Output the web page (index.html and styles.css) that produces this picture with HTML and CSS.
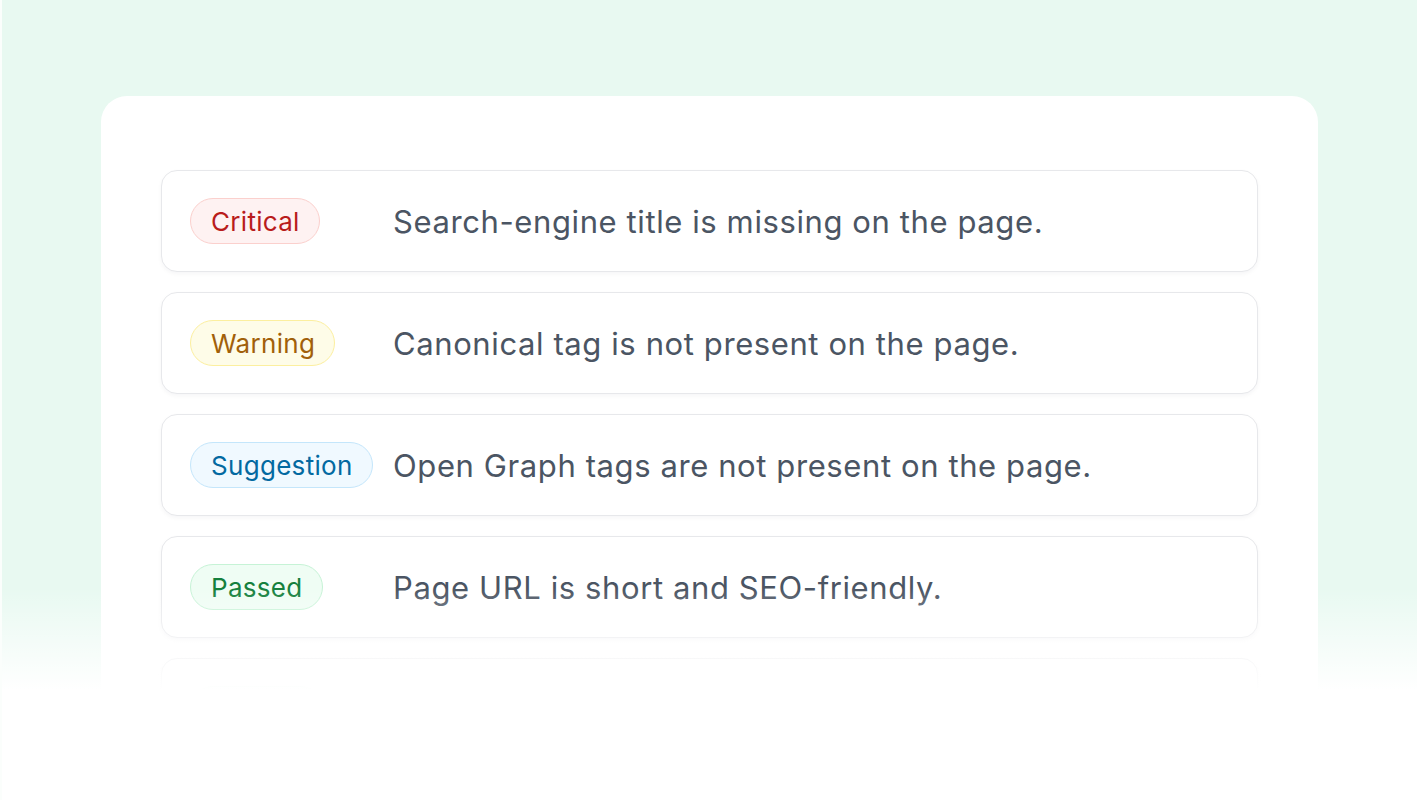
FILE: index.html
```html
<!DOCTYPE html>
<html lang="en">
<head>
<meta charset="utf-8">
<title>SEO checks</title>
<link rel="stylesheet" href="styles.css">
</head>
<body>
<div class="stage">
  <div class="panel">
    <ul class="checks">
      <li class="check">
        <span class="badge badge-critical">Critical</span>
        <span class="msg">Search-engine title is missing on the page.</span>
      </li>
      <li class="check">
        <span class="badge badge-warning">Warning</span>
        <span class="msg">Canonical tag is not present on the page.</span>
      </li>
      <li class="check">
        <span class="badge badge-suggestion">Suggestion</span>
        <span class="msg">Open Graph tags are not present on the page.</span>
      </li>
      <li class="check">
        <span class="badge badge-passed">Passed</span>
        <span class="msg">Page URL is short and SEO-friendly.</span>
      </li>
      <li class="check">
        <span class="badge badge-passed">Passed</span>
        <span class="msg">Meta description length is within limits.</span>
      </li>
    </ul>
  </div>
  <div class="fade"></div>
</div>
</body>
</html>
```

FILE: styles.css
```css
* { box-sizing: border-box; }
html, body { margin: 0; padding: 0; }
body {
  font-family: "Inter", "Noto Sans", "Liberation Sans", sans-serif;
  background: #ffffff;
}
.stage {
  position: relative;
  height: 800px;
  overflow: hidden;
  background: #e8f9f1;
  border-left: 2px solid #fbfefc;
  padding: 96px 0 0 99px;
}
.panel {
  width: 1217px;
  height: 760px;
  background: #ffffff;
  border-radius: 26px;
  padding: 74px 60px 0 60px;
}
.checks {
  list-style: none;
  margin: 0;
  padding: 0;
  display: flex;
  flex-direction: column;
  gap: 20px;
}
.check {
  display: grid;
  grid-template-columns: 183px 1fr;
  column-gap: 20px;
  align-items: center;
  padding: 27px 28px;
  border: 1px solid #e7e8eb;
  border-radius: 16px;
  background: #ffffff;
  box-shadow: 0 2px 4px rgba(17, 24, 39, 0.04);
}
.badge {
  justify-self: start;
  height: 46px;
  display: inline-flex;
  align-items: center;
  padding: 0 19px 0 20px;
  border-radius: 999px;
  border: 1px solid;
  font-size: 26px;
  letter-spacing: 0.3px;
  white-space: nowrap;
}
.badge-critical { background: #fef2f2; border-color: #fbd0cd; color: #b91c1c; }
.badge-warning { background: #fefce8; border-color: #fcef9f; color: #a1600a; }
.badge-suggestion { background: #f0f9ff; border-color: #c4e6fb; color: #0369a1; }
.badge-passed { background: #effdf4; border-color: #c6f3d6; color: #15803d; }
.msg {
  font-size: 31px;
  letter-spacing: 0.6px;
  color: #4b5563;
  white-space: nowrap;
}
.fade {
  position: absolute;
  left: 0;
  right: 0;
  top: 588px;
  bottom: 0;
  background: linear-gradient(to bottom, rgba(255,255,255,0) 0px, #ffffff 102px, #ffffff 100%);
}
```
